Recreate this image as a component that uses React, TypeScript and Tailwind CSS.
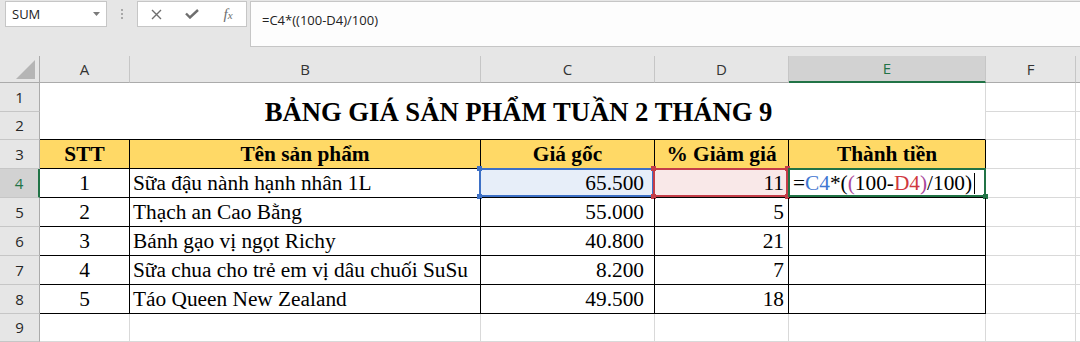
import React from "react";

const SERIF = "font-['Liberation_Serif','Times_New_Roman',serif]";
const UI = "font-['Open_Sans','Noto_Sans',sans-serif]";

const colHdr =
  "flex items-center justify-center bg-[#e6e6e6] border-r border-r-[#c6c6c6] border-b border-b-[#ababab] text-[15px] text-[#333333] " +
  UI;
const rowHdr =
  "flex items-center justify-center bg-[#e6e6e6] border-r border-r-[#ababab] border-b border-b-[#c6c6c6] text-[15px] text-[#262626] " +
  UI;
const blackCell =
  "relative flex items-center whitespace-nowrap border-r border-b border-black text-[21.33px] text-black pt-[1px] " + SERIF;
const grayCell = "border-r border-b border-[#d9d9d9]";

const data = [
  ["1", "Sữa đậu nành hạnh nhân 1L", "65.500", "11"],
  ["2", "Thạch an Cao Bằng", "55.000", "5"],
  ["3", "Bánh gạo vị ngọt Richy", "40.800", "21"],
  ["4", "Sữa chua cho trẻ em vị dâu chuối SuSu", "8.200", "7"],
  ["5", "Táo Queen New Zealand", "49.500", "18"],
];

function Toolbar() {
  return (
    <div className={"h-[57px] bg-[#e6e6e6] flex items-start " + UI}>
      <div className="mt-[1px] ml-[5px] w-[102px] h-[26px] bg-white border border-[#c6c6c6] flex items-center justify-between pl-[6px] pr-[6px]">
        <span className="text-[13px] text-[#222222] leading-none">SUM</span>
        <svg width="7" height="4" viewBox="0 0 7 4">
          <polygon points="0,0 7,0 3.5,4" fill="#7a7a7a" />
        </svg>
      </div>
      <div className="ml-[14px] mt-[9px] flex flex-col gap-[2px]">
        <div className="w-[2px] h-[2px] bg-[#a8a8a8]" />
        <div className="w-[2px] h-[2px] bg-[#a8a8a8]" />
        <div className="w-[2px] h-[2px] bg-[#a8a8a8]" />
      </div>
      <div className="ml-[14px] mt-[1px] w-[110px] h-[26px] bg-white border border-[#c6c6c6] flex items-center">
        <div className="w-[36px] flex justify-center">
          <svg width="11" height="11" viewBox="0 0 11 11">
            <path d="M1 1 L10 10 M10 1 L1 10" stroke="#6e6e6e" strokeWidth="1.4" fill="none" />
          </svg>
        </div>
        <div className="w-[36px] flex justify-center">
          <svg width="14" height="10" viewBox="0 0 14 10">
            <path d="M1 4.5 L5 8.5 L13 1" stroke="#6e6e6e" strokeWidth="2.4" fill="none" />
          </svg>
        </div>
        <div className="w-[36px] flex justify-center">
          <span className={"italic text-[15px] text-[#6e6e6e] leading-none " + SERIF}>
            f<span className="text-[11px]">x</span>
          </span>
        </div>
      </div>
      <div className="ml-[3px] mt-[1px] flex-1 h-[46px] bg-[#fdfdfd] border border-r-0 border-[#c6c6c6] pl-[11px] pt-[5px]">
        <span className="text-[13px] text-[#222222] leading-[20px]">=C4*((100-D4)/100)</span>
      </div>
    </div>
  );
}

function Handle({ pos, color }: { pos: string; color: string }) {
  return <div className={"absolute w-[5px] h-[5px] " + pos + " " + color} />;
}

export default function App() {
  return (
    <div className="w-[1080px] h-[342px] overflow-hidden bg-white flex flex-col">
      <Toolbar />
      <div className="grid grid-cols-[40px_90px_351px_174px_134px_197px_90px_4px] grid-rows-[27px_29px_28px_29px_29px_29px_29px_29px_29px_28px]">
        {/* column header row */}
        <div className="relative bg-[#e6e6e6] border-r border-b border-[#ababab]">
          <svg className="absolute left-[16px] top-[4px]" width="20" height="20" viewBox="0 0 20 20">
            <polygon points="19,0 19,19 0,19" fill="#b5b5b5" />
          </svg>
        </div>
        <div className={colHdr}>A</div>
        <div className={colHdr}>B</div>
        <div className={colHdr}>C</div>
        <div className={colHdr}>D</div>
        <div className="flex items-center justify-center bg-[#d2d2d2] border-r border-r-[#c6c6c6] border-b-2 border-b-[#217346] text-[15px] text-[#217346] font-['Open_Sans','Noto_Sans',sans-serif]">
          E
        </div>
        <div className={colHdr}>F</div>
        <div className="bg-[#e6e6e6] border-b border-b-[#ababab]" />

        {/* row 1 */}
        <div className={rowHdr}>1</div>
        <div className="col-start-2 col-end-7 row-start-2 row-end-4 flex items-center justify-center pl-[12px] pt-[2px] border-r border-r-[#d9d9d9] border-b border-b-black">
          <span className={"font-bold text-[26.67px] leading-none text-black whitespace-nowrap " + SERIF}>
            BẢNG GIÁ SẢN PHẨM TUẦN 2 THÁNG 9
          </span>
        </div>
        <div className={grayCell} />
        <div className="border-b border-[#d9d9d9]" />

        {/* row 2 */}
        <div className={rowHdr}>2</div>
        <div className={grayCell} />
        <div className="border-b border-[#d9d9d9]" />

        {/* row 3 header */}
        <div className={rowHdr}>3</div>
        <div className={blackCell + " justify-center font-bold bg-[#ffd966]"}>STT</div>
        <div className={blackCell + " justify-center font-bold bg-[#ffd966]"}>Tên sản phẩm</div>
        <div className={blackCell + " justify-center font-bold bg-[#ffd966]"}>Giá gốc</div>
        <div className={blackCell + " justify-center font-bold bg-[#ffd966]"}>% Giảm giá</div>
        <div className={blackCell + " justify-center font-bold bg-[#ffd966]"}>Thành tiền</div>
        <div className={grayCell} />
        <div className="border-b border-[#d9d9d9]" />

        {data.map((r, i) => {
          const active = i === 0;
          return (
            <React.Fragment key={i}>
              {active ? (
                <div
                  className={
                    "flex items-center justify-center bg-[#d2d2d2] border-r-2 border-r-[#217346] border-b border-b-[#c6c6c6] text-[15px] text-[#217346] " +
                    UI
                  }
                >
                  {i + 4}
                </div>
              ) : (
                <div className={rowHdr}>{i + 4}</div>
              )}
              <div className={blackCell + " justify-center"}>{r[0]}</div>
              <div className={blackCell + " pl-[3px]"}>{r[1]}</div>
              {active ? (
                <div className={blackCell + " justify-end pr-[10px] bg-[#e7eef9]"}>
                  <span className="relative z-10">{r[2]}</span>
                  <div className="absolute -left-[2px] -top-[1px] right-0 bottom-0 border-2 border-[#3d70c6]">
                    <Handle pos="-left-[4px] -top-[4px]" color="bg-[#3d70c6]" />
                    <Handle pos="-left-[4px] -bottom-[4px]" color="bg-[#3d70c6]" />
                  </div>
                </div>
              ) : (
                <div className={blackCell + " justify-end pr-[10px]"}>{r[2]}</div>
              )}
              {active ? (
                <div className={blackCell + " justify-end pr-[4px] bg-[#f9e8e8]"}>
                  <span className="relative z-10">{r[3]}</span>
                  <div className="absolute -left-[2px] -top-[1px] right-0 bottom-0 border-2 border-[#c43d48]">
                    <Handle pos="-left-[4px] -top-[4px]" color="bg-[#c43d48]" />
                    <Handle pos="-left-[4px] -bottom-[4px]" color="bg-[#c43d48]" />
                    <Handle pos="-right-[4px] -top-[4px]" color="bg-[#c43d48]" />
                    <Handle pos="-right-[4px] -bottom-[4px]" color="bg-[#c43d48]" />
                  </div>
                </div>
              ) : (
                <div className={blackCell + " justify-end pr-[4px]"}>{r[3]}</div>
              )}
              {active ? (
                <div className={blackCell + " pl-[4px] overflow-visible"}>
                  <span className="relative z-10 flex items-center">
                    <span>=</span>
                    <span className="text-[#3f76d1]">C4</span>
                    <span>*(</span>
                    <span className="text-[#a9489a]">(</span>
                    <span>100-</span>
                    <span className="text-[#d0393f]">D4</span>
                    <span className="text-[#a9489a]">)</span>
                    <span>/100)</span>
                    <span className="ml-[2px] w-[1px] h-[21px] bg-black" />
                  </span>
                  <div className="absolute -left-[1px] -top-[1px] -right-[1px] bottom-0 border-2 border-[#217346]">
                    <div className="absolute -right-[4px] -bottom-[4px] w-[5px] h-[5px] bg-[#217346]" />
                  </div>
                </div>
              ) : (
                <div className={blackCell} />
              )}
              <div className={grayCell} />
              <div className="border-b border-[#d9d9d9]" />
            </React.Fragment>
          );
        })}

        {/* row 9 */}
        <div className={rowHdr}>9</div>
        <div className={grayCell} />
        <div className={grayCell} />
        <div className={grayCell} />
        <div className={grayCell} />
        <div className={grayCell} />
        <div className={grayCell} />
        <div className="border-b border-[#d9d9d9]" />
      </div>
    </div>
  );
}
